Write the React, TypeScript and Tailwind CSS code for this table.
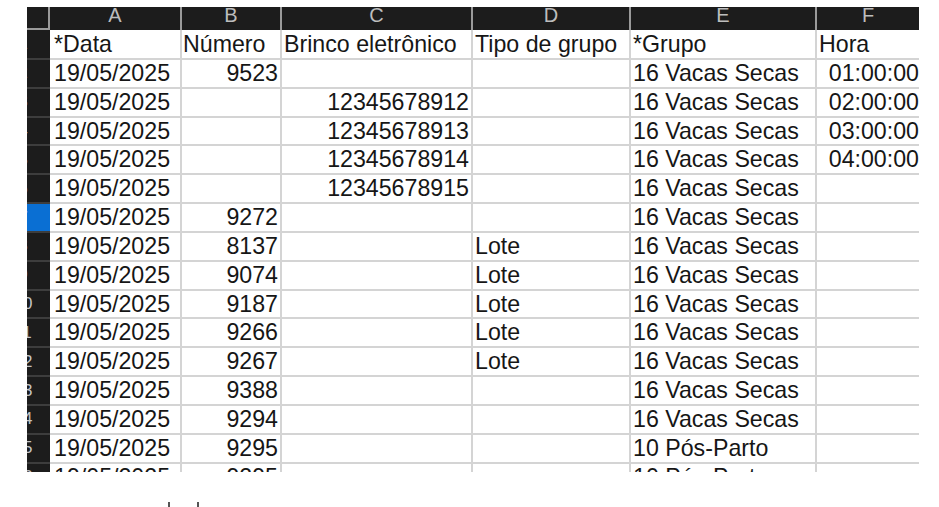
import React from "react";

const cols = [
  { w: "w-[132px]", pl: "pl-[4px]" },
  { w: "w-[100px]", pl: "pl-[1px]" },
  { w: "w-[191px]", pl: "pl-[2px]" },
  { w: "w-[158px]", pl: "pl-[2px]" },
  { w: "w-[186px]", pl: "pl-[2px]" },
  { w: "w-[102px]", pl: "pl-[2px]" },
];
const letters = ["A", "B", "C", "D", "E", "F"];
const alignCls = [
  "pl-[4px]",
  "text-right pr-[2px]",
  "text-right pr-[2px]",
  "pl-[2px]",
  "pl-[2px]",
  "text-right pr-0",
];

const header = ["*Data", "Número", "Brinco eletrônico", "Tipo de grupo", "*Grupo", "Hora"];

const data: string[][] = [
  ["19/05/2025", "9523", "", "", "16 Vacas Secas", "01:00:00"],
  ["19/05/2025", "", "12345678912", "", "16 Vacas Secas", "02:00:00"],
  ["19/05/2025", "", "12345678913", "", "16 Vacas Secas", "03:00:00"],
  ["19/05/2025", "", "12345678914", "", "16 Vacas Secas", "04:00:00"],
  ["19/05/2025", "", "12345678915", "", "16 Vacas Secas", ""],
  ["19/05/2025", "9272", "", "", "16 Vacas Secas", ""],
  ["19/05/2025", "8137", "", "Lote", "16 Vacas Secas", ""],
  ["19/05/2025", "9074", "", "Lote", "16 Vacas Secas", ""],
  ["19/05/2025", "9187", "", "Lote", "16 Vacas Secas", ""],
  ["19/05/2025", "9266", "", "Lote", "16 Vacas Secas", ""],
  ["19/05/2025", "9267", "", "Lote", "16 Vacas Secas", ""],
  ["19/05/2025", "9388", "", "", "16 Vacas Secas", ""],
  ["19/05/2025", "9294", "", "", "16 Vacas Secas", ""],
  ["19/05/2025", "9295", "", "", "10 Pós-Parto", ""],
  ["19/05/2025", "9295", "", "", "10 Pós-Parto", ""],
];

function RowHead({ n, selected, h }: { n: number; selected?: boolean; h: string }) {
  return (
    <div
      className={`${h} w-[23px] shrink-0 overflow-hidden flex justify-end items-center border-b-2 ${
        selected ? "bg-[#0a6fd3] border-[#3d3d3d] text-white" : "bg-[#1c1c1c] border-[#3d3d3d] text-[#c4c4c4]"
      }`}
    >
      <div className="w-[54px] shrink-0 text-center text-[17px] leading-[20px]">{n}</div>
    </div>
  );
}

export default function App() {
  return (
    <div
      className="w-[939px] h-[507px] bg-white overflow-hidden"
      style={{ fontFamily: '"Liberation Sans", Arial, sans-serif' }}
    >
      <div className="ml-[27px] mt-[7px] w-[892px] h-[465px] overflow-hidden">
        {/* column header */}
        <div className="flex h-[23px]">
          <div className="w-[23px] shrink-0 h-[23px] bg-[#1c1c1c] border-r-2 border-b-2 border-[#9a9a9a]" />
          {cols.map((c, i) => (
            <div
              key={i}
              className={`${c.w} shrink-0 h-[23px] bg-[#1c1c1c] ${
                i < 5 ? "border-r-2 border-[#9a9a9a]" : ""
              } overflow-hidden text-center text-[20px] leading-[16px] text-[#bdbdbd]`}
            >
              {letters[i]}
            </div>
          ))}
        </div>
        {/* row 1 header */}
        <div className="flex">
          <RowHead n={1} h="h-[30px]" />
          {cols.map((c, i) => (
            <div
              key={i}
              className={`${c.w} ${c.pl} shrink-0 h-[30px] border-b-2 ${
                i < 5 ? "border-r-2" : ""
              } border-[#d4d4d4] text-[23.2px] leading-[29px] text-[#161616] whitespace-nowrap overflow-hidden`}
            >
              {header[i]}
            </div>
          ))}
        </div>
        {data.map((r, ri) => (
          <div className="flex" key={ri}>
            <RowHead n={ri + 2} selected={ri + 2 === 7} h="h-[28.84px]" />
            {cols.map((c, i) => (
              <div
                key={i}
                className={`${c.w} shrink-0 h-[28.84px] border-b-2 ${
                  i < 5 ? "border-r-2" : ""
                } border-[#d4d4d4] text-[23.2px] leading-[27.8px] text-[#161616] whitespace-nowrap overflow-hidden ${alignCls[i]}`}
              >
                {r[i]}
              </div>
            ))}
          </div>
        ))}
      </div>
      <div className="flex mt-[30px] h-[5px]">
        <div className="ml-[168px] w-[2px] h-[5px] bg-[#555]" />
        <div className="ml-[27px] w-[2px] h-[5px] bg-[#555]" />
      </div>
    </div>
  );
}
